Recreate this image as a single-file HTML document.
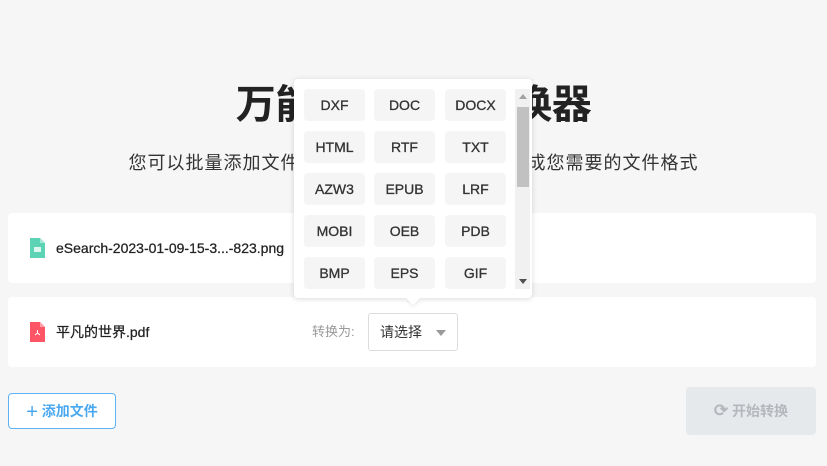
<!DOCTYPE html>
<html><head><meta charset="utf-8"><style>
*{box-sizing:border-box;margin:0;padding:0}
body{width:827px;height:466px;background:#f6f6f6;font-family:"Liberation Sans","Noto Sans CJK SC",sans-serif;position:relative;overflow:hidden;color:#333}
.abs{position:absolute}
h1{position:absolute;left:0;width:827px;top:80px;text-align:center;font-size:40px;font-weight:bold;color:#222;line-height:50px;letter-spacing:-0.5px}
.sub{position:absolute;left:0;width:827px;top:150px;text-align:center;font-size:18px;line-height:26px;color:#333;letter-spacing:1px}
.card{position:absolute;left:8px;width:808px;height:70px;background:#fff;border-radius:4px}
.fname{position:absolute;left:48px;top:25px;font-size:14px;line-height:20px;color:#222;-webkit-text-stroke:0.25px #222}
.icon{position:absolute;left:22px;top:25px;width:15px;height:20px}
.pop{position:absolute;left:294px;top:79px;width:238px;height:219px;background:#fff;border-radius:4px;box-shadow:0 1px 6px rgba(0,0,0,.15)}
.b{position:absolute;width:61px;height:32px;background:#f5f5f5;border-radius:4px;font-size:14px;line-height:32px;text-align:center;color:#333;-webkit-text-stroke:0.3px #333}
</style></head><body>
<h1>万能文件格式转换器</h1>
<div class="sub">您可以批量添加文件后，选择格式一键帮您转换成您需要的文件格式</div>
<div class="card" style="top:213px">
<svg class="icon" viewBox="0 0 15 20"><path d="M0 0H10L15 5V20H0Z" fill="#5cd3b5"/><path d="M10 0V5H15Z" fill="#a5e8d6"/><rect x="4" y="9" width="7" height="5" fill="#fff" opacity=".8"/></svg>
<div class="fname">eSearch-2023-01-09-15-3...-823.png</div></div>
<div class="card" style="top:297px">
<svg class="icon" viewBox="0 0 15 20"><path d="M0 0H10L15 5V20H0Z" fill="#fd5566"/><path d="M10 0V5H15Z" fill="#ffa0aa"/><path d="M7.5 8V11L5 13M7.5 11L10 13" stroke="#fff" stroke-width="1" fill="none"/></svg>
<div class="fname">平凡的世界.pdf</div>
<div class="abs" style="left:304px;top:25px;font-size:13px;color:#999;line-height:20px">转换为:</div>
<div class="abs" style="left:360px;top:16px;width:90px;height:38px;border:1px solid #ddd;border-radius:3px;background:#fff"><span class="abs" style="left:11px;top:9px;font-size:14px;line-height:18px">请选择</span><span class="abs" style="left:67px;top:16px;border-left:5px solid transparent;border-right:5px solid transparent;border-top:6px solid #999"></span></div>
</div>
<div class="pop">
<div class="b" style="left:10px;top:10px">DXF</div><div class="b" style="left:80px;top:10px">DOC</div><div class="b" style="left:151px;top:10px">DOCX</div>
<div class="b" style="left:10px;top:52px">HTML</div><div class="b" style="left:80px;top:52px">RTF</div><div class="b" style="left:151px;top:52px">TXT</div>
<div class="b" style="left:10px;top:94px">AZW3</div><div class="b" style="left:80px;top:94px">EPUB</div><div class="b" style="left:151px;top:94px">LRF</div>
<div class="b" style="left:10px;top:136px">MOBI</div><div class="b" style="left:80px;top:136px">OEB</div><div class="b" style="left:151px;top:136px">PDB</div>
<div class="b" style="left:10px;top:178px">BMP</div><div class="b" style="left:80px;top:178px">EPS</div><div class="b" style="left:151px;top:178px">GIF</div>
<div class="abs" style="left:221px;top:10px;width:15px;height:200px;background:#f1f1f1"></div>
<div class="abs" style="left:223px;top:28px;width:12px;height:80px;background:#c1c1c1"></div>
<div class="abs" style="left:225px;top:15px;border-left:4px solid transparent;border-right:4px solid transparent;border-bottom:5px solid #a3a3a3"></div>
<div class="abs" style="left:225px;top:200px;border-left:4px solid transparent;border-right:4px solid transparent;border-top:5px solid #505050"></div>
<div class="abs" style="left:114px;top:214px;width:10px;height:10px;background:#fff;transform:rotate(45deg);box-shadow:2px 2px 3px rgba(0,0,0,.06)"></div>
</div>
<div class="abs" style="left:8px;top:393px;width:108px;height:36px;border:1px solid #5fb3f5;border-radius:4px;background:#fff;color:#4aa8f0;font-size:14px;font-weight:bold;line-height:34px;text-align:center"><span style="font-size:20px;vertical-align:-2px;font-weight:normal">+</span> 添加文件</div>
<div class="abs" style="left:686px;top:387px;width:130px;height:48px;background:#e6e9ec;border-radius:4px;color:#b4b8bc;font-size:14px;font-weight:bold;line-height:48px;text-align:center"><span style="font-size:17px">⟳</span> 开始转换</div>
</body></html>
